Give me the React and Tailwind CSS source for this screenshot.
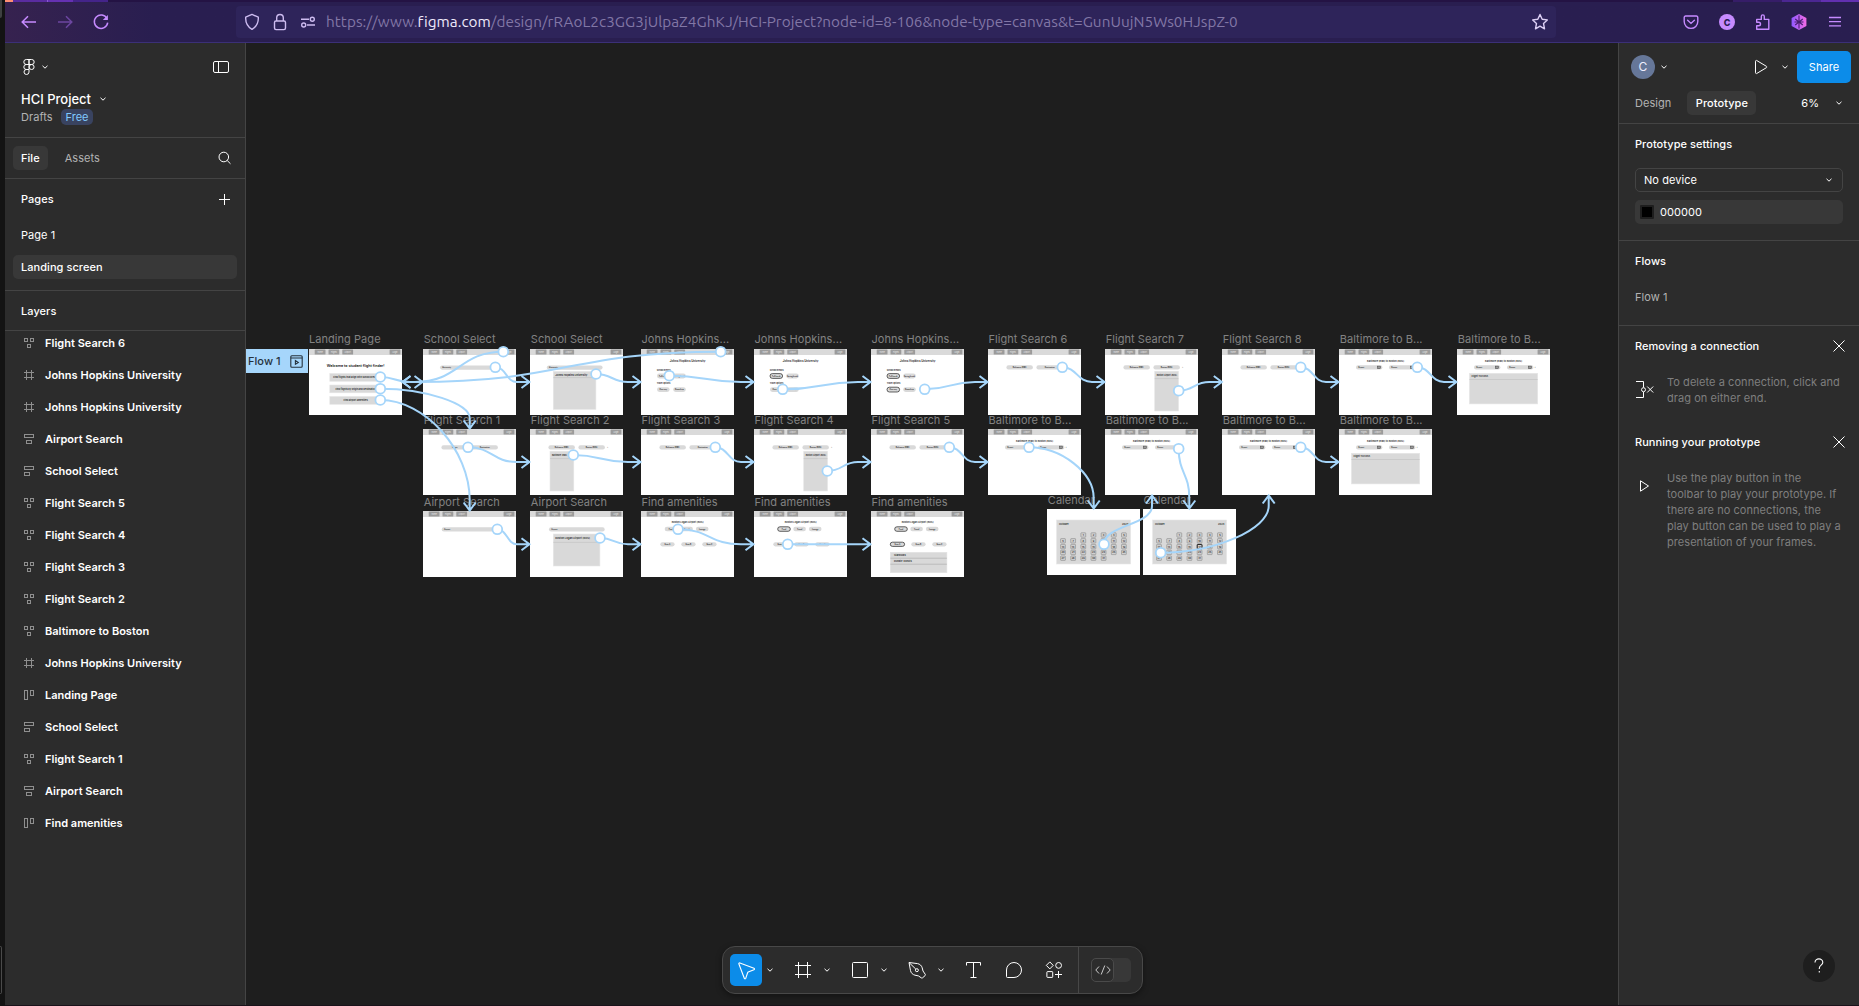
import React from "react";

const Chevron = ({ className = "" }) => (
  <svg width="8" height="8" viewBox="0 0 8 8" fill="none" stroke="#fff" className={"shrink-0 " + className}>
    <path d="M1.5 2.8 L4 5.2 L6.5 2.8" />
  </svg>
);

/* ---------- browser chrome ---------- */

function BrowserBar() {
  return (
    <header className="flex h-[43px] shrink-0 flex-col border-b border-[#3b3077] bg-[#291e50] bg-linear-to-r from-[#36224f] via-[#291e50] via-8% to-[#291e50]">
      <div className="flex h-[2px] shrink-0">
        <div className="w-2 bg-[#ff8f74]" />
        <div className="w-[34px] bg-[#5a2ca0]" />
        <div className="w-px bg-[#8a5ad0]" />
        <div className="w-[25px] bg-[#6531b2]" />
        <div className="w-[35px] bg-[#44248a]" />
        <div className="flex-1 bg-[#241344]" />
        <div className="w-[49px] bg-[#361d68]" />
        <div className="w-[39px] bg-[#4b2792]" />
        <div className="w-[38px] bg-[#6230b0]" />
      </div>
      <div className="flex h-10 items-center">
        <div className="flex w-[231px] items-center gap-[18px] pl-[15px]">
          <svg width="18" height="18" viewBox="0 0 18 18" fill="none" stroke="#c68bff" strokeWidth="1.5">
            <path d="M16 9H2.5M8 3.2L2.2 9L8 14.8" />
          </svg>
          <svg width="18" height="18" viewBox="0 0 18 18" fill="none" stroke="#6c46a0" strokeWidth="1.5">
            <path d="M2 9H15.5M10 3.2L15.8 9L10 14.8" />
          </svg>
          <svg width="18" height="18" viewBox="0 0 18 18" fill="none" stroke="#c68bff" strokeWidth="1.5">
            <path d="M15 5.6A6.7 6.7 0 1 0 15.7 9.6" />
            <path d="M15.9 2V7H10.8Z" fill="#c68bff" stroke="none" />
          </svg>
        </div>
        <div className="flex h-8 w-[1320px] items-center rounded bg-[#2e245a] pl-2">
          <svg width="16" height="18" viewBox="0 0 16 18" fill="none" stroke="#cdbcf0" strokeWidth="1.4">
            <path d="M8 1.4L14.3 4.2C14.6 9.5 12.6 13.6 8 16.4C3.4 13.6 1.4 9.5 1.7 4.2Z" strokeLinejoin="round" />
          </svg>
          <svg className="ml-3" width="16" height="18" viewBox="0 0 16 18" fill="none" stroke="#cdbcf0" strokeWidth="1.4">
            <rect x="2.5" y="8" width="11" height="8.6" rx="1.5" />
            <path d="M4.7 8V4.8a3.3 3.3 0 0 1 6.6 0V8" />
          </svg>
          <svg className="ml-3" width="16" height="14" viewBox="0 0 16 14" fill="none" stroke="#cdbcf0" strokeWidth="1.4">
            <path d="M1 4.2H9M7 10H15" />
            <circle cx="12.3" cy="4.2" r="2" />
            <circle cx="3.7" cy="10" r="2" />
          </svg>
          <div className="ml-[10px] w-[1205px] whitespace-nowrap font-['Ubuntu','Noto_Sans',sans-serif] text-[15.3px] leading-6 tracking-[0.05px] text-[#8277a6]">
            https://www.<span className="text-[#eee9fb]">figma.com</span>
            /design/rRAoL2c3GG3jUlpaZ4GhKJ/HCI-Project?node-id=8-106&amp;node-type=canvas&amp;t=GunUujN5Ws0HJspZ-0
          </div>
          <svg width="18" height="18" viewBox="0 0 18 18" fill="none" stroke="#ddd0f5" strokeWidth="1.4" strokeLinejoin="round">
            <path d="M9 1.5L11.2 6.3L16.3 6.9L12.5 10.4L13.5 15.8L9 13.1L4.5 15.8L5.5 10.4L1.7 6.9L6.8 6.3Z" />
          </svg>
        </div>
        <div className="flex items-center gap-[18px] pl-[126px]">
          <svg width="18" height="18" viewBox="0 0 18 18" fill="none" stroke="#c68bff" strokeWidth="1.4">
            <path d="M3.6 3H14.4a1.4 1.4 0 0 1 1.4 1.4V8.6a6.8 6.8 0 0 1-13.6 0V4.4A1.4 1.4 0 0 1 3.6 3Z" />
            <path d="M5.6 7.2L9 10.4L12.4 7.2" strokeLinecap="round" />
          </svg>
          <div className="grid size-[18px] place-items-center">
            <div className="grid size-4 place-items-center rounded-full bg-[#c68bff] font-['Inter',sans-serif] text-[9px] font-extrabold leading-none text-[#2a1d52]">C</div>
          </div>
          <svg width="18" height="18" viewBox="0 0 18 18" fill="none" stroke="#c68bff" strokeWidth="1.4" strokeLinejoin="round">
            <path d="M2.7 16.3V12.8H4.7a1.8 1.8 0 0 0 0-3.6H2.7V6.4H7.3V3.4a1.5 1.5 0 0 1 3 0V6.4H14.8V16.3Z" />
          </svg>
          <svg width="18" height="18" viewBox="0 0 18 18">
            <defs>
              <linearGradient id="hex" x1="0" x2="1">
                <stop offset="0" stopColor="#9059ff" />
                <stop offset="1" stopColor="#f36be6" />
              </linearGradient>
            </defs>
            <path d="M9 1L16.4 5V13L9 17L1.6 13V5Z" fill="url(#hex)" />
            <path d="M9 2.5V15.5M5.2 6L12.8 12M12.8 6L5.2 12M4.5 9H13.5" stroke="#47206f" strokeWidth="1.1" />
          </svg>
          <svg width="18" height="18" viewBox="0 0 18 18" stroke="#c68bff" strokeWidth="1.3">
            <path d="M3 4.5H15M3 8.7H15M3 12.9H15" />
          </svg>
        </div>
      </div>
    </header>
  );
}

/* ---------- left panel ---------- */

const layerIcons = {
  wrap: (
    <>
      <rect x=".5" y=".5" width="3" height="3" />
      <rect x="6.5" y=".5" width="3" height="3" />
      <rect x="3.5" y="6.5" width="3" height="3" />
    </>
  ),
  frame: <path d="M2.5 0V10M7.5 0V10M0 2.5H10M0 7.5H10" />,
  center: (
    <>
      <rect x=".5" y=".5" width="9" height="3" />
      <rect x="2.5" y="6.5" width="5" height="3" />
    </>
  ),
  left: (
    <>
      <rect x=".5" y=".5" width="9" height="3" />
      <rect x=".5" y="6.5" width="5" height="3" />
    </>
  ),
  columns: (
    <>
      <rect x=".5" y=".5" width="3" height="9" />
      <rect x="6.5" y=".5" width="3" height="5" />
    </>
  ),
};

const layers = [
  ["wrap", "Flight Search 6"],
  ["frame", "Johns Hopkins University"],
  ["frame", "Johns Hopkins University"],
  ["center", "Airport Search"],
  ["left", "School Select"],
  ["wrap", "Flight Search 5"],
  ["wrap", "Flight Search 4"],
  ["wrap", "Flight Search 3"],
  ["wrap", "Flight Search 2"],
  ["wrap", "Baltimore to Boston"],
  ["frame", "Johns Hopkins University"],
  ["columns", "Landing Page"],
  ["left", "School Select"],
  ["wrap", "Flight Search 1"],
  ["center", "Airport Search"],
  ["columns", "Find amenities"],
];

function LeftPanel() {
  return (
    <aside className="flex w-[241px] shrink-0 flex-col border-r border-[#444] bg-[#2c2c2c]">
      <div className="h-[95px] shrink-0 border-b border-[#444] pl-4 pr-4 pt-[14px]">
        <div className="flex h-5 items-center">
          <svg width="12" height="18" viewBox="0 0 12 18" fill="none" stroke="#fff" className="ml-[2px]">
            <path d="M6 1.5H3.3a2.5 2.5 0 0 0 0 5H6ZM6 1.5H8.7a2.5 2.5 0 0 1 0 5H6ZM6 6.5H3.3a2.5 2.5 0 0 0 0 5H6Z" />
            <path d="M6 11.5H3.3a2.5 2.5 0 1 0 2.7 2.6Z" />
            <circle cx="8.6" cy="9" r="2.5" />
          </svg>
          <Chevron className="ml-[6px]" />
          <svg width="16" height="12" viewBox="0 0 16 12" fill="none" stroke="#fff" className="ml-auto">
            <rect x=".5" y=".5" width="15" height="11" rx="1.5" />
            <path d="M5.5 .5V11.5" />
          </svg>
        </div>
        <div className="mt-3 flex h-5 items-center text-[13px] font-medium tracking-[0px]">
          HCI Project
          <Chevron className="ml-2" />
        </div>
        <div className="flex h-4 items-center gap-2 text-[#b3b3b3]">
          <span className="w-8">Drafts</span>
          <span className="flex h-4 w-8 items-center justify-center rounded-[5px] bg-[#394360] text-[#80caff]">Free</span>
        </div>
      </div>
      <div className="flex h-[41px] shrink-0 items-center border-b border-[#444] pl-2 pr-[14px]">
        <span className="flex h-6 items-center rounded-[5px] bg-[#383838] px-2 font-medium">File</span>
        <span className="ml-[17px] text-[#b3b3b3]">Assets</span>
        <svg width="13" height="14" viewBox="0 0 13 14" fill="none" stroke="#fff" className="ml-auto">
          <circle cx="5.8" cy="6" r="4.8" />
          <path d="M9.2 9.5L12.5 12.8" />
        </svg>
      </div>
      <div className="h-[112px] shrink-0 border-b border-[#444] px-2">
        <div className="flex h-10 items-center justify-between pl-2 pr-[7px] font-medium">
          Pages
          <svg width="11" height="11" viewBox="0 0 11 11" stroke="#fff">
            <path d="M5.5 0V11M0 5.5H11" />
          </svg>
        </div>
        <div className="mt-1 flex h-6 items-center px-2">Page 1</div>
        <div className="mt-2 flex h-6 w-[224px] items-center rounded-[5px] bg-[#383838] px-2 font-medium">Landing screen</div>
      </div>
      <div className="flex h-10 shrink-0 items-center border-b border-[#444] pl-4 font-medium">Layers</div>
      <ul className="flex flex-col gap-2">
        {layers.map(([icon, name], i) => (
          <li key={i} className="flex h-6 items-center gap-[11px] pl-[19px] font-semibold tracking-[0.02px]">
            <svg width="10" height="10" viewBox="0 0 10 10" fill="none" stroke="#8f8f8f">
              {layerIcons[icon]}
            </svg>
            {name}
          </li>
        ))}
      </ul>
    </aside>
  );
}

/* ---------- wireframe thumbnails, drawn in a 93 x 66 box ---------- */

const T = ({ x, y, s = 1.8, children, mid, b = 400, fill = "#222" }) => (
  <text x={x} y={y} fontSize={s} textAnchor={mid ? "middle" : "start"} fontWeight={b} fill={fill} letterSpacing="0">
    {children}
  </text>
);

const Pill = ({ x, y, w, h = 4.2, on, label, cal, start }) => (
  <>
    <rect x={x} y={y} width={w} height={h} rx={h / 2} fill="#d9d9d9" stroke={on ? "#222" : "none"} strokeWidth="0.7" />
    <T x={start ? x + 2.3 : x + w / 2} y={y + h / 2 + 0.6} mid={!start} b={600}>{label}</T>
    {cal && <rect x={x + w - 5} y={y + 0.8} width="3" height="2.6" fill="#999" stroke="#444" strokeWidth="0.5" />}
  </>
);

const Menu = ({ x, y, w, h, line, label, size = 2 }) => (
  <>
    <rect x={x} y={y} width={w} height={h} fill="#d9d9d9" stroke="#e6e6e6" strokeWidth="0.6" />
    <path d={`M${x} ${y + line}h${w}`} stroke="#bbb" strokeWidth="0.5" />
    <T x={x + 2} y={y + line / 2 + 1} s={size} b={600}>{label}</T>
  </>
);

const Nav = () => (
  <>
    <rect width="93" height="6" fill="#dadada" />
    {[[5.7, "Home"], [19.5, "Flights"], [33.3, "Airport"], [80.6, "Login"]].map(([x, t]) => (
      <g key={t}>
        <rect x={x} y="0.5" width="10.8" height="5" rx="0.6" fill="#9b9b9b" />
        <T x={x + 5.4} y={3.6} s={1.9} mid fill="#eee">{t}</T>
      </g>
    ))}
  </>
);

const ROUTE = "Baltimore (BWI) to Boston (BOS)";

const art = {
  landing: () => (
    <>
      <T x={46.6} y={18} s={3.65} mid b={600}>Welcome to student flight finder!</T>
      {["Find flights that align with school breaks", "Find flights by origin and destination", "Find airport amenities"].map((t, i) => (
        <g key={t}>
          <rect x="20.8" y={24.5 + i * 11.5} width="52" height="7.8" fill="#d9d9d9" stroke="#e6e6e6" strokeWidth="0.6" />
          <T x={46.6} y={29.2 + i * 11.5} s={2.3} mid b={600}>{t}</T>
        </g>
      ))}
    </>
  ),
  school1: () => <Pill x={17} y={16.5} w={55} label="University" start />,
  school2: () => (
    <>
      <Pill x={16.8} y={16.5} w={55.8} label="University" start />
      <Menu x={23.3} y={22.4} w={42.6} h={38} line={6.2} label="Johns Hopkins University" size={2.6} />
    </>
  ),
  jhu: ({ a, b }) => (
    <>
      <T x={46.6} y={12.9} s={2.9} mid b={600}>Johns Hopkins University</T>
      <T x={15.7} y={22.2} s={2} b={600}>School Breaks</T>
      <Pill x={16} y={24.6} w={12.6} h={4.8} on={a} label="Fall break" />
      <Pill x={32.2} y={24.6} w={12.6} h={4.8} label="Spring break" />
      <T x={15.7} y={34.8} s={2} b={600}>Travel options</T>
      <Pill x={16} y={38.2} w={12.6} h={4.8} on={b} label="One way" />
      <Pill x={32.2} y={38.2} w={12.6} h={4.8} label="Round trip" />
    </>
  ),
  flight: ({ drop, from = "Baltimore (BWI)", to = "Boston (BOS)" }) => (
    <>
      <Pill x={18.4} y={16.3} w={26.5} label={from} />
      <Pill x={48.4} y={16.3} w={26.5} label={to} />
      {drop === 1 && <Menu x={20} y={22.2} w={23.8} h={39.8} line={7.4} label="Baltimore (BWI)" />}
      {drop === 2 && <Menu x={49.7} y={22.2} w={23.8} h={39.8} line={7.4} label="Boston Airport (BOS)" />}
      {drop && <T x={77} y={19} s={1.8}>+</T>}
    </>
  ),
  airport1: () => <Pill x={18.7} y={16.3} w={56} label="Airport" start />,
  airport2: () => (
    <>
      <Pill x={19} y={16.3} w={55.7} label="Airport" start />
      <Menu x={23.3} y={23} w={46.6} h={32} line={8.4} label="Boston Logan Airport (BOS)" size={2.6} />
    </>
  ),
  amenities: ({ a, b, list }) => (
    <>
      <T x={46.6} y={11.9} s={2.4} mid b={600}>Boston Logan Airport (BOS)</T>
      {["Food", "Travel", "Lounge"].map((t, i) => (
        <Pill key={t} x={23.7 + i * 15.6} y={15.8} w={12.6} h={4.5} on={a && i === 0} label={t} />
      ))}
      {["Gate A", "Gate B", "Gate C"].map((t, i) => (
        <Pill key={t} x={19.3 + i * 21} y={31.2} w={14.3} h={4.2} on={b && i === 0} label={t} />
      ))}
      {list && (
        <>
          <rect x="19.3" y="41.3" width="56.6" height="20.4" fill="#d9d9d9" stroke="#e3e3e3" strokeWidth="0.6" />
          <path d="M19.3 47.2h56.6M19.3 53.2h56.6" stroke="#aaa" strokeWidth="0.6" />
          <T x={23} y={45.3} s={2.4} b={600}>Starbucks</T>
          <T x={23} y={51.3} s={2.4} b={600}>Dunkin&apos; Donuts</T>
        </>
      )}
    </>
  ),
  route: ({ list }) => (
    <>
      <T x={46.6} y={12.8} s={2.4} mid b={600}>{ROUTE}</T>
      <Pill x={17} y={16.3} w={26.4} label="Depart" start cal />
      <Pill x={50} y={16.3} w={26.4} label="Return" start cal />
      <T x={77.5} y={19} s={2}>+</T>
      {list && <Menu x={12.4} y={24.3} w={68.3} h={30.6} line={6.2} label="Flight 1123456" size={2.4} />}
    </>
  ),
  calendar: ({ on }) => (
    <>
      <rect x="9.6" y="11" width="74" height="44" fill="#d9d9d9" stroke="#e6e6e6" strokeWidth="0.6" />
      <T x={12} y={16.4} s={2.5} b={600}>October</T>
      <T x={75} y={16.4} s={2.5} b={600}>2024</T>
      {Array.from({ length: 31 }, (_, k) => {
        const cell = k + 2;
        const cx = 16 + (cell % 7) * 10.15;
        const cy = 26 + Math.floor(cell / 7) * 5.8;
        return (
          <g key={k}>
            <rect x={cx - 2.4} y={cy - 2.2} width="4.8" height="4.4" rx="0.5" fill="#d0d0d0" stroke={on === k + 1 ? "#000" : "#8a8a8a"} strokeWidth={on === k + 1 ? 0.9 : 0.6} />
            <T x={cx} y={cy + 0.9} s={2.4} mid b={600}>{k + 1}</T>
          </g>
        );
      })}
    </>
  ),
};

const frames = [
  { x: 308.5, y: 348.7, name: "Landing Page", kind: "landing" },
  { x: 423.2, y: 348.7, name: "School Select", kind: "school1" },
  { x: 530.3, y: 348.7, name: "School Select", kind: "school2" },
  { x: 641, y: 348.7, name: "Johns Hopkins...", kind: "jhu" },
  { x: 754, y: 348.7, name: "Johns Hopkins...", kind: "jhu", a: true },
  { x: 871, y: 348.7, name: "Johns Hopkins...", kind: "jhu", a: true, b: true },
  { x: 988, y: 348.7, name: "Flight Search 6", kind: "flight", to: "Destination" },
  { x: 1105.2, y: 348.7, name: "Flight Search 7", kind: "flight", drop: 2 },
  { x: 1222.3, y: 348.7, name: "Flight Search 8", kind: "flight" },
  { x: 1339.2, y: 348.7, name: "Baltimore to B...", kind: "route" },
  { x: 1457.3, y: 348.7, name: "Baltimore to B...", kind: "route", list: true },
  { x: 423.2, y: 429, name: "Flight Search 1", kind: "flight", from: "Origin", to: "Destination" },
  { x: 530.3, y: 429, name: "Flight Search 2", kind: "flight", drop: 1 },
  { x: 641, y: 429, name: "Flight Search 3", kind: "flight", to: "Destination" },
  { x: 754, y: 429, name: "Flight Search 4", kind: "flight", drop: 2 },
  { x: 871, y: 429, name: "Flight Search 5", kind: "flight" },
  { x: 988, y: 429, name: "Baltimore to B...", kind: "route" },
  { x: 1105.2, y: 429, name: "Baltimore to B...", kind: "route" },
  { x: 1222.3, y: 429, name: "Baltimore to B...", kind: "route" },
  { x: 1339.2, y: 429, name: "Baltimore to B...", kind: "route", list: true },
  { x: 423.2, y: 511, name: "Airport Search", kind: "airport1" },
  { x: 530.3, y: 511, name: "Airport Search", kind: "airport2" },
  { x: 641, y: 511, name: "Find amenities", kind: "amenities" },
  { x: 754, y: 511, name: "Find amenities", kind: "amenities", a: true },
  { x: 871, y: 511, name: "Find amenities", kind: "amenities", a: true, b: true, list: true },
  { x: 1047.3, y: 509, name: "Calendar", kind: "calendar" },
  { x: 1143, y: 509, name: "Calendar", kind: "calendar", on: 17 },
];

/* Connections: start point, arrow tip, and start/end axis ("hh", "hv" or "vv"). */
const links = [
  [380.3, 377, 423, 382, "hh"],
  [380.3, 388.7, 469.7, 429, "hv"],
  [380.3, 400, 469.7, 511, "hv"],
  [503.3, 351.7, 402, 382, "hh"],
  [720.7, 351.7, 402, 382, "hh"],
  [495.3, 367.3, 530, 382, "hh"],
  [596, 374, 641, 382, "hh"],
  [669.3, 375.7, 754, 382, "hh"],
  [782.7, 389.3, 871, 382, "hh"],
  [924.7, 389.3, 988, 382, "hh"],
  [1062.3, 367.3, 1105, 382, "hh"],
  [1178.7, 390.7, 1222.3, 382, "hh"],
  [1300.7, 367.3, 1339, 382, "hh"],
  [1417.3, 367.3, 1457, 382, "hh"],
  [468, 447.3, 530, 462, "hh"],
  [573.3, 455, 641, 462, "hh"],
  [715.3, 447.3, 754, 462, "hh"],
  [827.3, 471, 871, 462, "hh"],
  [949.3, 447.3, 988, 462, "hh"],
  [1300.7, 447.3, 1339, 462, "hh"],
  [497.3, 529.3, 530, 544.3, "hh"],
  [600, 538, 641, 544.3, "hh"],
  [678, 529.3, 754, 544.3, "hh"],
  [787.7, 544.3, 871, 544.3, "hh"],
  [1029, 447.3, 1093.7, 509, "hv"],
  [1104, 544.3, 1152, 495, "vv"],
  [1178.7, 448.7, 1189.3, 509, "vv"],
  [1160.7, 552.7, 1268.7, 495, "hv"],
];

function linkPath([x1, y1, x2, y2, mode]) {
  if (mode === "hh") {
    const d = Math.sign(x2 - x1);
    const ex = x2 - 13 * d;
    const mx = (x1 + ex) / 2;
    return `M${x1} ${y1}C${mx} ${y1} ${mx} ${y2} ${ex} ${y2}H${x2}M${x2 - 8.5 * d} ${y2 - 6}L${x2 - 0.5 * d} ${y2}L${x2 - 8.5 * d} ${y2 + 6}`;
  }
  const d = Math.sign(y2 - y1);
  const ey = y2 - 11 * d;
  const head = `V${y2}M${x2 - 6} ${y2 - 8.5 * d}L${x2} ${y2 - 0.5 * d}L${x2 + 6} ${y2 - 8.5 * d}`;
  if (mode === "hv") {
    return `M${x1} ${y1}C${x1 + (x2 - x1) * 0.5} ${y1} ${x2} ${y1 + (ey - y1) * 0.5} ${x2} ${ey}${head}`;
  }
  const my = (y1 + ey) / 2;
  return `M${x1} ${y1}C${x1} ${my} ${x2} ${my} ${x2} ${ey}${head}`;
}

const OX = 246;
const OY = 43;

function Canvas() {
  return (
    <main className="relative min-w-0 flex-1 overflow-hidden bg-[#1e1e1e]">
      {frames.map((f, i) => (
        <div
          key={"l" + i}
          className="absolute whitespace-nowrap text-[11px] leading-4 tracking-[0.05px] text-[#828282]"
          style={{ left: f.x - OX + 0.5, top: f.y - OY - 17.5 }}
        >
          {f.name}
        </div>
      ))}
      {frames.map((f, i) => {
        const Art = art[f.kind];
        return (
          <svg
            key={i}
            className="absolute h-[66px] w-[93px] bg-white"
            viewBox="0 0 93 66"
            preserveAspectRatio="none"
            style={{ left: f.x - OX, top: f.y - OY }}
          >
            {f.kind !== "calendar" && <Nav />}
            <Art {...f} />
          </svg>
        );
      })}
      <div className="absolute left-0 top-[306px] flex h-6 w-[62px] items-center justify-between bg-[#a6d6fb] pl-[2px] pr-[5px] text-[11px] font-medium text-[#26323d]">
        Flow 1
        <svg width="13" height="13" viewBox="0 0 13 13" fill="none" stroke="#26323d" strokeWidth="1.1">
          <rect x=".8" y=".8" width="11.4" height="11.4" rx="1" />
          <path d="M.8 3H12.2M5.4 5.6V9.2L8.3 7.4Z" />
        </svg>
      </div>
      <svg className="absolute inset-0" width="1372" height="962" viewBox="246 43 1372 962" fill="none" stroke="#a5d5fa" strokeWidth="2">
        {links.map((l, i) => (
          <path key={i} d={linkPath(l)} />
        ))}
        {links.map((l, i) => (
          <circle key={i} cx={l[0]} cy={l[1]} r="4.9" fill="#fff" strokeWidth="1.8" />
        ))}
      </svg>
      <Toolbar />
    </main>
  );
}

function Toolbar() {
  return (
    <div className="absolute bottom-[11px] left-[476px] flex h-12 w-[421px] items-center rounded-[13px] border border-[#484848] bg-[#2c2c2c] pl-[7px] shadow-[0_2px_6px_rgba(0,0,0,0.4)]">
      <div className="grid size-8 place-items-center rounded-[5px] bg-[#0c8ce9]">
        <svg width="18" height="18" viewBox="0 0 18 18" fill="none" stroke="#fff" strokeWidth="1.1" strokeLinejoin="round" className="ml-px mt-px">
          <path d="M1.9 .9L16 6.2a.8.8 0 0 1 0 1.5L10.2 10a1 1 0 0 0-.5.5L7.8 16.2a.8.8 0 0 1-1.5 0L.9 2A.8.8 0 0 1 1.9 .9Z" />
        </svg>
      </div>
      <Chevron className="ml-1" />
      <svg className="ml-5" width="18" height="18" viewBox="0 0 18 18" fill="none" stroke="#fff">
        <path d="M4.5 1V17M13.5 1V17M1 4.5H17M1 13.5H17" />
      </svg>
      <Chevron className="ml-[11px]" />
      <svg className="ml-5" width="18" height="18" viewBox="0 0 18 18" fill="none" stroke="#fff">
        <rect x="1.5" y="1.5" width="15" height="15" rx="1" />
      </svg>
      <Chevron className="ml-[11px]" />
      <svg className="ml-[19px]" width="20" height="20" viewBox="0 0 20 20" fill="none" stroke="#fff" strokeLinejoin="round">
        <path d="M2 2.5L10.5 3.6C12.8 4 14.6 5.6 15.2 7.8L16 11L18.3 14.4A1 1 0 0 1 18.1 15.6L15.6 17.8A1 1 0 0 1 14.4 17.9L11.4 15.9L8 15.2C5.8 14.7 4 13 3.5 10.6Z" />
        <path d="M2.2 2.7L8.8 9.1" />
        <circle cx="9.9" cy="10.2" r="1.5" />
      </svg>
      <Chevron className="ml-[10px]" />
      <svg className="ml-5" width="17" height="18" viewBox="0 0 17 18" fill="none" stroke="#fff">
        <path d="M1.5 4.5V1.5H15.5V4.5M8.5 1.5V16.5M5.5 16.5H11.5" />
      </svg>
      <svg className="ml-[23px]" width="18" height="18" viewBox="0 0 18 18" fill="none" stroke="#fff">
        <path d="M9 1.5a7.5 7.5 0 1 1 0 15H2.5a1 1 0 0 1-1-1V9A7.5 7.5 0 0 1 9 1.5Z" />
      </svg>
      <svg className="ml-[22px]" width="18" height="18" viewBox="0 0 18 18" fill="none" stroke="#fff">
        <path d="M4.8 .9L8.2 4.4L4.8 7.9L1.3 4.4ZM13.5 10V17M10 13.5H17" />
        <circle cx="13.6" cy="4.4" r="2.9" />
        <rect x="1.9" y="10.6" width="5.8" height="5.8" rx=".6" />
      </svg>
      <div className="ml-[15px] h-full w-px bg-[#484848]" />
      <div className="ml-3 flex h-6 w-10 rounded-[5px] bg-[#383838]">
        <div className="grid h-6 w-[23px] place-items-center rounded-[5px] border border-[#4a4a4a] bg-[#2c2c2c]">
          <svg width="16" height="12" viewBox="0 0 16 12" fill="none" stroke="#ccc">
            <path d="M4 2.5L.8 6L4 9.5M12 2.5L15.2 6L12 9.5M9.8 1.5L6.2 10.5" />
          </svg>
        </div>
      </div>
    </div>
  );
}

/* ---------- right panel ---------- */

const Close = () => (
  <svg width="12" height="12" viewBox="0 0 12 12" stroke="#fff">
    <path d="M.5 .5L11.5 11.5M11.5 .5L.5 11.5" />
  </svg>
);

function RightPanel() {
  return (
    <aside className="flex w-[241px] shrink-0 flex-col border-l border-[#444] bg-[#2c2c2c]">
      <div className="h-[81px] shrink-0 border-b border-[#444] pl-3 pr-2 pt-2">
        <div className="flex h-8 items-center">
          <span className="grid size-6 place-items-center rounded-full bg-[#667799] text-[12px] text-[#eef]">C</span>
          <Chevron className="ml-[5px]" />
          <svg className="ml-auto" width="14" height="16" viewBox="0 0 14 16" fill="none" stroke="#fff" strokeLinejoin="round">
            <path d="M1.5 2.2a.8.8 0 0 1 1.2-.7L12.4 7.3a.8.8 0 0 1 0 1.4L2.7 14.5a.8.8 0 0 1-1.2-.7Z" />
          </svg>
          <Chevron className="ml-[13px]" />
          <span className="ml-2 grid h-8 w-[54px] place-items-center rounded-[5px] bg-[#0c8ce9]">Share</span>
        </div>
        <div className="mt-2 flex h-6 items-center pl-1">
          <span className="text-[#b3b3b3]">Design</span>
          <span className="ml-4 grid h-6 w-[69px] place-items-center rounded-[5px] bg-[#383838] font-medium">Prototype</span>
          <span className="ml-auto">6%</span>
          <Chevron className="ml-4 mr-2" />
        </div>
      </div>
      <div className="h-[117px] shrink-0 border-b border-[#444] px-4">
        <div className="flex h-10 items-center font-medium">Prototype settings</div>
        <div className="mt-1 flex h-6 items-center justify-between rounded-[5px] border border-[#444] pl-2 pr-[9px]">
          No device
          <Chevron />
        </div>
        <div className="mt-2 flex h-6 items-center gap-[6px] rounded-[5px] bg-[#383838] pl-[5px]">
          <span className="size-[14px] rounded-[1px] border-2 border-[#1e1e1e] bg-black" />
          000000
        </div>
      </div>
      <div className="h-[85px] shrink-0 border-b border-[#444] px-4">
        <div className="flex h-10 items-center font-medium">Flows</div>
        <div className="mt-1 flex h-6 items-center text-[#b3b3b3]">Flow 1</div>
      </div>
      <div className="flex h-10 shrink-0 items-center justify-between pl-4 pr-[14px] font-medium">
        Removing a connection
        <Close />
      </div>
      <div className="flex h-14 shrink-0 gap-[12px] pl-4 pt-2 leading-4 text-[#7f7f7f]">
        <svg className="mt-[6px]" width="20" height="20" viewBox="0 0 20 20" fill="none" stroke="#fff">
          <path d="M1 1.5H8.5V7.5M8.5 12V17.5H1M12.2 6.5L18.2 12.5M18.2 6.5L12.2 12.5" />
          <circle cx="8.5" cy="9.7" r="2" />
        </svg>
        <p>To delete a connection, click and<br />drag on either end.</p>
      </div>
      <div className="flex h-10 shrink-0 items-center justify-between pl-4 pr-[14px] font-medium">
        Running your prototype
        <Close />
      </div>
      <div className="flex shrink-0 gap-[12px] pl-4 pt-2 leading-4 text-[#7f7f7f]">
        <svg className="mt-[6px]" width="20" height="20" viewBox="0 0 20 20" fill="none" stroke="#fff" strokeLinejoin="round">
          <path d="M5.5 4.8V15.2L13.5 10Z" />
        </svg>
        <p>Use the play button in the<br />toolbar to play your prototype. If<br />there are no connections, the<br />play button can be used to play a<br />presentation of your frames.</p>
      </div>
      <div className="mb-[23px] mr-6 mt-auto grid size-8 shrink-0 place-items-center self-end rounded-full bg-[#1e1e1e]">
        <svg width="10" height="16" viewBox="0 0 10 16" fill="none" stroke="#fff" strokeWidth="1.1">
          <path d="M1 4.5A3.9 3.6 0 0 1 8.8 4.5C8.8 7 5.3 7.4 5.3 10.2V11" />
          <path d="M5.3 13V14.5" />
        </svg>
      </div>
    </aside>
  );
}

export default function App() {
  return (
    <div className="flex h-[1006px] w-[1859px] overflow-hidden bg-[#131313] font-['Inter',sans-serif] text-[11px] leading-4 tracking-[0.055px] text-white antialiased">
      <div className="flex w-[5px] shrink-0 flex-col justify-between pb-3">
        <div className="h-[18px] w-[2px] rounded-br bg-[#3e4040]" />
        <div className="h-12 w-[2px] rounded-r border-y border-r border-[#4a4a4a]" />
      </div>
      <div className="flex min-w-0 flex-1 flex-col">
        <BrowserBar />
        <div className="flex min-h-0 flex-1">
          <LeftPanel />
          <Canvas />
          <RightPanel />
        </div>
        <div className="h-px shrink-0 bg-[#1a121a]" />
      </div>
    </div>
  );
}
